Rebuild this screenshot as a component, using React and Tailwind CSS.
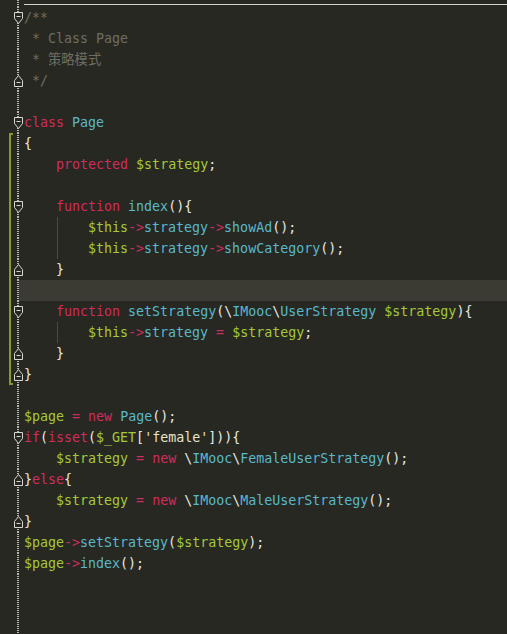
const K = "text-[#d12c5c]";
const C = "text-[#5ab8cb]";
const V = "text-[#a5c83a]";
const P = "text-[#e8e8e2]";
const M = "text-[#6e6e64]";
const S = "text-[#e8e2c8]";

const lines = [
  { fold: "open", t: [["/**", M]] },
  { t: [[" * Class Page", M]] },
  { t: [[" * 策略模式", M]] },
  { fold: "close", t: [[" */", M]] },
  { t: [] },
  { fold: "open", t: [["class", K], [" ", P], ["Page", C]] },
  { change: "top", t: [["{", P]] },
  { change: "mid", t: [["    ", P], ["protected", K], [" ", P], ["$strategy", V], [";", P]] },
  { change: "mid", t: [] },
  { change: "mid", fold: "open", t: [["    ", P], ["function", K], [" ", P], ["index", C], ["(){", P]] },
  { change: "mid", guide: true, t: [["$this", V], ["->", K], ["strategy", C], ["->", K], ["showAd", C], ["();", P]] },
  { change: "mid", guide: true, t: [["$this", V], ["->", K], ["strategy", C], ["->", K], ["showCategory", C], ["();", P]] },
  { change: "mid", fold: "close", t: [["    }", P]] },
  { change: "mid", hl: true, t: [] },
  {
    change: "mid",
    fold: "open",
    t: [
      ["    ", P], ["function", K], [" ", P], ["setStrategy", C], ["(\\", P], ["IMooc", C], ["\\", P],
      ["UserStrategy", C], [" ", P], ["$strategy", V], ["){", P],
    ],
  },
  { change: "mid", guide: true, t: [["$this", V], ["->", K], ["strategy", C], [" ", P], ["=", K], [" ", P], ["$strategy", V], [";", P]] },
  { change: "mid", fold: "close", t: [["    }", P]] },
  { change: "bottom", fold: "close", t: [["}", P]] },
  { t: [] },
  { t: [["$page", V], [" ", P], ["=", K], [" ", P], ["new", K], [" ", P], ["Page", C], ["();", P]] },
  { fold: "open", t: [["if", K], ["(", P], ["isset", K], ["(", P], ["$_GET", V], ["[", P], ["'female'", S], ["])){", P]] },
  {
    t: [
      ["    ", P], ["$strategy", V], [" ", P], ["=", K], [" ", P], ["new", K], [" \\", P], ["IMooc", C], ["\\", P],
      ["FemaleUserStrategy", C], ["();", P],
    ],
  },
  { fold: "close", t: [["}", P], ["else", K], ["{", P]] },
  {
    t: [
      ["    ", P], ["$strategy", V], [" ", P], ["=", K], [" ", P], ["new", K], [" \\", P], ["IMooc", C], ["\\", P],
      ["MaleUserStrategy", C], ["();", P],
    ],
  },
  { fold: "close", t: [["}", P]] },
  { t: [["$page", V], ["->", K], ["setStrategy", C], ["(", P], ["$strategy", V], [");", P]] },
  { t: [["$page", V], ["->", K], ["index", C], ["();", P]] },
];

function FoldMark({ kind }) {
  const d =
    kind === "open"
      ? "M0.5 0.5 H8.5 V6.5 L4.5 11.5 L0.5 6.5 Z"
      : "M0.5 11.5 H8.5 V5.5 L4.5 0.5 L0.5 5.5 Z";
  const y = kind === "open" ? 4.5 : 7.5;
  return (
    <svg width="9" height="12" viewBox="0 0 9 12" className="absolute top-[5px] -left-[3px]">
      <path d={d} fill="#272822" stroke="#d8d8d2" strokeWidth="1" />
      <path d={`M2.5 ${y} H6.5`} stroke="#d8d8d2" strokeWidth="1" />
    </svg>
  );
}

function Gutter({ fold, change, hl }) {
  const mark =
    change === "top"
      ? "border-l-2 border-t-2 border-[#869b2e]"
      : change === "bottom"
      ? "border-l-2 border-b-2 border-[#869b2e]"
      : change === "mid"
      ? "border-l-2 border-[#869b2e]"
      : "";
  return (
    <div className="flex w-[24px] shrink-0 self-stretch">
      <div className="w-[9px]" />
      <div className={`w-[4px] ${mark}`} />
      <div className="w-[4px]" />
      <div className="relative w-[2px] bg-[repeating-linear-gradient(to_bottom,#b8b8b2_0_1px,transparent_1px_2px)]">
        {fold && <FoldMark kind={fold} />}
      </div>
      <div className={`w-[5px] ${hl ? "bg-[#3b3b33]" : ""}`} />
    </div>
  );
}

export default function App() {
  return (
    <div className="min-h-screen flex flex-col bg-[#272822] font-['DejaVu_Sans_Mono','Noto_Sans_CJK_SC',monospace] text-[13.3px]">
      <div className="flex h-[7px]">
        <Gutter />
        <div className="flex-1">
          <div className="mt-[4px] h-[1px] bg-[#d4d4ce]" />
        </div>
      </div>
      {lines.map((l, i) => (
        <div key={i} className="flex h-[21px]">
          <Gutter fold={l.fold} change={l.change} hl={l.hl} />
          <div className={`flex flex-1 items-center whitespace-pre leading-[21px] ${l.hl ? "bg-[#3b3b33]" : ""}`}>
            {l.guide && (
              <>
                <div className="w-[33px]" />
                <div className="w-px self-stretch bg-[#4a4a42]" />
                <div className="w-[30px]" />
              </>
            )}
            {l.t.map(([s, c], j) => (
              <span key={j} className={c}>
                {s}
              </span>
            ))}
          </div>
        </div>
      ))}
      <div className="flex flex-1">
        <Gutter />
        <div className="flex-1" />
      </div>
    </div>
  );
}
